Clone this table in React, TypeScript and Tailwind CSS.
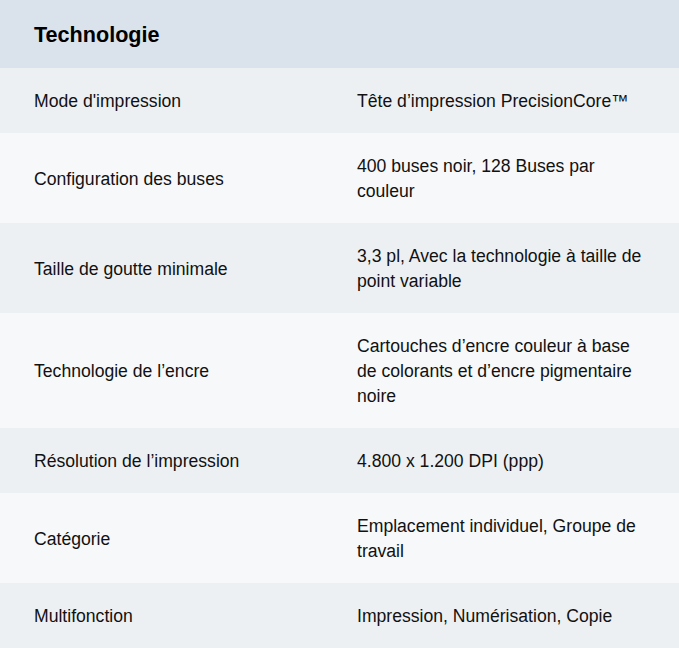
const rows: [string, string][] = [
  ["Mode d'impression", "Tête d’impression PrecisionCore™"],
  ["Configuration des buses", "400 buses noir, 128 Buses par couleur"],
  ["Taille de goutte minimale", "3,3 pl, Avec la technologie à taille de point variable"],
  [
    "Technologie de l’encre",
    "Cartouches d’encre couleur à base de colorants et d’encre pigmentaire noire",
  ],
  ["Résolution de l’impression", "4.800 x 1.200 DPI (ppp)"],
  ["Catégorie", "Emplacement individuel, Groupe de travail"],
  ["Multifonction", "Impression, Numérisation, Copie"],
];

export default function App() {
  return (
    <div className="w-[679px] min-h-[648px] bg-white font-['Liberation_Sans',Arial,sans-serif] text-[#111]">
      <div className="bg-[#dae3ec] px-[34px] pt-[22px] pb-[20px]">
        <h2 className="text-[21.6px] leading-[26px] font-bold text-black">Technologie</h2>
      </div>

      {rows.map(([label, value], i) => (
        <div
          key={label}
          className={
            "grid grid-cols-[323px_1fr] items-center pl-[34px] pr-[34px] pt-[21px] pb-[19px] text-[17.6px] leading-[25px] " +
            (i % 2 === 0 ? "bg-[#edf0f3]" : "bg-[#f6f8fa]")
          }
        >
          <div>{label}</div>
          <div>{value}</div>
        </div>
      ))}
    </div>
  );
}
